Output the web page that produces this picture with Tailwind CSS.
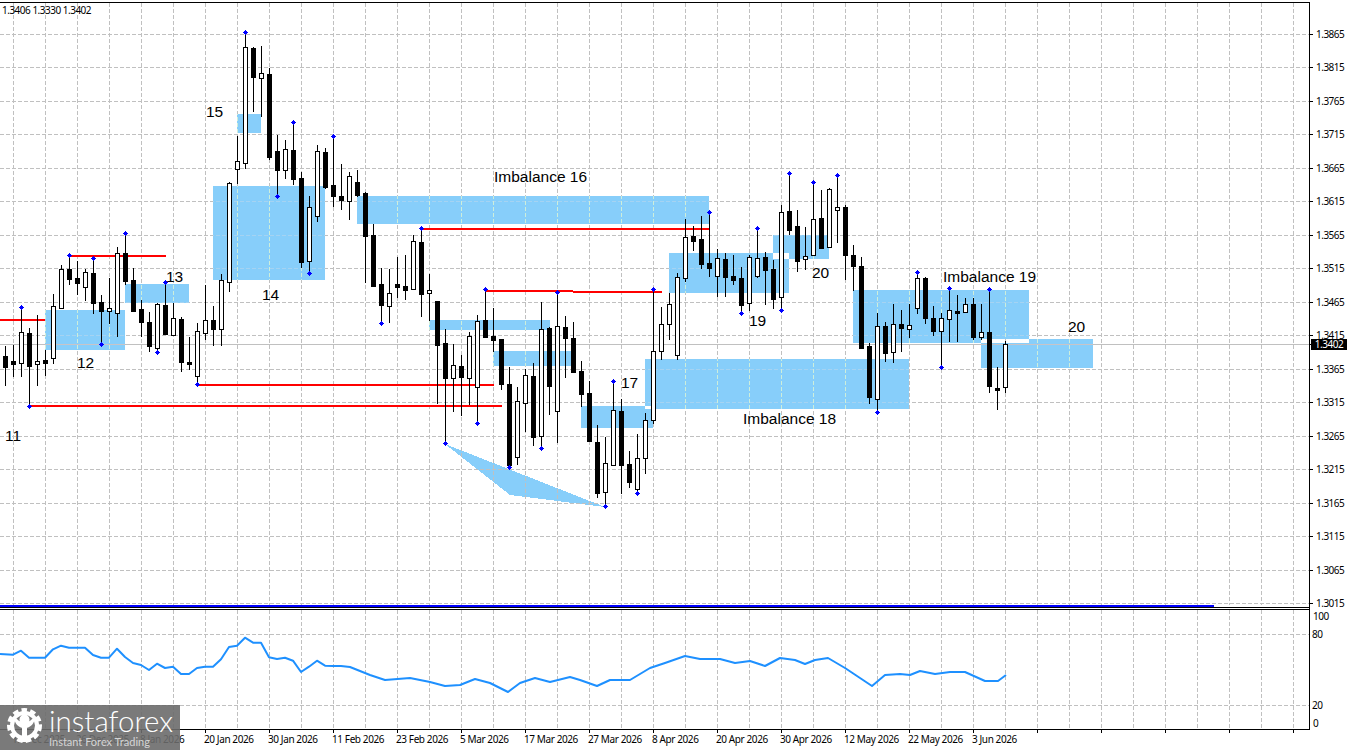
<!DOCTYPE html>
<html lang="en">
<head>
    <meta charset="UTF-8">
    <title>GBP/USD daily chart</title>
    <script src="https://cdn.jsdelivr.net/npm/@tailwindcss/browser@4"></script>
</head>
<body class="bg-white">
    <div class="relative w-[1350px] h-[750px] overflow-hidden bg-white text-black font-['Liberation_Sans',Arial,sans-serif]">
        <!-- Chart canvas, filled by the script below -->
        <svg id="chart" class="absolute inset-0" width="1350" height="750" viewBox="0 0 1350 750"></svg>

        <!-- OHLC line -->
        <span class="absolute left-[2px] top-[4px] font-['Noto_Sans',sans-serif] text-[10px] tracking-[-0.5px] leading-[12px]">1.3406 1.3330 1.3402</span>

        <!-- Chart annotations -->
        <div class="text-[15.5px] leading-[18px]">
            <span class="absolute left-[5px] top-[427px]">11</span>
            <span class="absolute left-[77px] top-[354px]">12</span>
            <span class="absolute left-[166px] top-[268px]">13</span>
            <span class="absolute left-[262px] top-[286px]">14</span>
            <span class="absolute left-[206px] top-[103px]">15</span>
            <span class="absolute left-[494px] top-[168px]">Imbalance 16</span>
            <span class="absolute left-[621px] top-[374px]">17</span>
            <span class="absolute left-[743px] top-[410px]">Imbalance 18</span>
            <span class="absolute left-[749px] top-[312px]">19</span>
            <span class="absolute left-[943px] top-[268px]">Imbalance 19</span>
            <span class="absolute left-[812px] top-[264px]">20</span>
            <span class="absolute left-[1068px] top-[318px]">20</span>
        </div>

        <!-- Price scale -->
        <div class="absolute left-[1316px] top-[27.5px] flex flex-col font-['Noto_Sans',sans-serif] text-[10px] tracking-[-0.5px] leading-[12px]">
            <span class="h-[33.5px]">1.3865</span>
            <span class="h-[33.5px]">1.3815</span>
            <span class="h-[33.5px]">1.3765</span>
            <span class="h-[33.5px]">1.3715</span>
            <span class="h-[33.5px]">1.3665</span>
            <span class="h-[33.5px]">1.3615</span>
            <span class="h-[33.5px]">1.3565</span>
            <span class="h-[33.5px]">1.3515</span>
            <span class="h-[33.5px]">1.3465</span>
            <span class="h-[33.5px]">1.3415</span>
            <span class="h-[33.5px]">1.3365</span>
            <span class="h-[33.5px]">1.3315</span>
            <span class="h-[33.5px]">1.3265</span>
            <span class="h-[33.5px]">1.3215</span>
            <span class="h-[33.5px]">1.3165</span>
            <span class="h-[33.5px]">1.3115</span>
            <span class="h-[33.5px]">1.3065</span>
            <span class="h-[33.5px]">1.3015</span>
        </div>
        <div class="absolute left-[1311px] top-[339px] w-[36px] h-[11px] bg-black text-white text-center font-['Noto_Sans',sans-serif] text-[10px] tracking-[-0.5px] leading-[11px]">1.3402</div>

        <!-- RSI scale -->
        <div class="font-['Noto_Sans',sans-serif] text-[10px] tracking-[-0.5px] leading-[12px]">
            <span class="absolute left-[1313px] top-[610px]">100</span>
            <span class="absolute left-[1312px] top-[628px]">80</span>
            <span class="absolute left-[1312px] top-[699px]">20</span>
            <span class="absolute left-[1313px] top-[717px]">0</span>
        </div>

        <!-- Time scale -->
        <div class="absolute left-[12px] top-[733px] flex font-['Noto_Sans',sans-serif] text-[10px] tracking-[-0.4px] leading-[12px] whitespace-nowrap">
            <span class="w-[64px]">15 Dec 2025</span>
            <span class="w-[64px]">26 Dec 2025</span>
            <span class="w-[64px]">8 Jan 2026</span>
            <span class="w-[64px]">20 Jan 2026</span>
            <span class="w-[64px]">30 Jan 2026</span>
            <span class="w-[64px]">11 Feb 2026</span>
            <span class="w-[64px]">23 Feb 2026</span>
            <span class="w-[64px]">5 Mar 2026</span>
            <span class="w-[64px]">17 Mar 2026</span>
            <span class="w-[64px]">27 Mar 2026</span>
            <span class="w-[64px]">8 Apr 2026</span>
            <span class="w-[64px]">20 Apr 2026</span>
            <span class="w-[64px]">30 Apr 2026</span>
            <span class="w-[64px]">12 May 2026</span>
            <span class="w-[64px]">22 May 2026</span>
            <span class="w-[64px]">3 Jun 2026</span>
        </div>

        <!-- Watermark -->
        <div class="absolute left-0 top-[705px] w-[180px] h-[45px] bg-[#6b6b6b]/90 flex text-white">
            <svg class="ml-[6px] mt-[2px] shrink-0" width="37" height="37" viewBox="0 0 37 37">
                <circle cx="18.5" cy="18.5" r="15.5" fill="none" stroke="#fff" stroke-width="4" stroke-dasharray="5.5 3.2"/>
                <circle cx="18.5" cy="18.5" r="12.5" fill="none" stroke="#fff" stroke-width="4"/>
                <circle cx="18.5" cy="12.5" r="5" fill="#fff"/>
                <path d="M8 12 C10 19 14 20 16 21 L16 35 L21 35 L21 21 C23 20 27 19 29 12 L26 12 C24 16 13 16 11 12 Z" fill="#fff"/>
            </svg>
            <div class="ml-[6px] flex flex-col">
                <span class="text-[29.5px] leading-[31px] font-light font-['Lato',sans-serif]">instaforex</span>
                <span class="text-[11px] leading-[12px] text-white/70 font-['Lato',sans-serif]">Instant Forex Trading</span>
            </div>
        </div>
    </div>

    <script>
        // [high, body top, body bottom, low, white?, dot]
        const candles = [
            [346,356,367,386,0],[345,361,364,377,0],[307,332,363,377,1,'t'],[328,333,366,406,0,'b'],
            [315,361,364,386,1],[350,360,363,376,0],[294,306,358,364,1],[265,269,308,309,1],
            [255,269,279,285,0,'t'],[261,278,283,295,0],[269,272,287,301,1],[258,273,303,314,0,'t'],
            [295,302,311,344,0,'b'],[278,308,311,324,1],[247,253,313,337,1],[233,253,281,285,0,'t'],
            [268,280,311,312,0],[300,309,322,337,0],[312,322,346,352,0],[303,304,348,352,1,'b'],
            [282,305,334,334,0,'t'],[303,318,335,335,1],[317,319,362,372,0],[337,362,364,370,0],
            [323,331,376,384,1,'b'],[285,320,333,340,1],[306,320,329,346,0],[274,280,329,346,1],
            [182,183,282,292,1],[136,161,169,184,1],[32,47,163,169,1,'t'],[47,48,77,112,0],
            [46,73,78,117,1],[68,74,157,160,0],[135,151,170,196,0,'b'],[140,149,170,179,1],
            [122,150,179,185,0,'t'],[172,178,262,268,0],[196,207,261,273,1,'b'],[145,151,216,222,1],
            [148,152,187,189,0],[136,185,196,207,0,'t'],[164,196,200,210,0],[172,176,201,220,1],
            [170,182,195,197,0],[192,193,236,283,0],[224,235,286,287,0],[268,284,305,323,0,'b'],
            [269,293,306,323,1],[257,284,287,298,0],[255,286,290,300,0],[235,241,289,289,1],
            [228,242,294,317,0,'t'],[274,290,293,321,1],[301,301,345,404,0],[329,343,378,443,0,'b'],
            [344,365,378,412,1],[355,366,377,416,0],[332,336,378,405,1],[315,321,387,423,1,'b'],
            [289,320,337,338,0,'t'],[308,336,340,352,0],[339,339,384,390,0],[367,384,465,467,0,'b'],
            [387,401,457,465,1],[369,375,403,432,1],[363,376,437,446,0],[302,329,436,448,1,'b'],
            [327,328,386,415,0],[292,326,411,443,1,'t'],[316,327,338,378,0],[322,338,372,373,0],
            [361,371,394,407,0],[381,393,441,441,0],[425,442,493,498,0],[437,463,492,506,1,'b'],
            [381,410,465,466,1,'t'],[399,411,465,494,0],[451,464,482,488,0],[434,458,489,493,1,'b'],
            [413,420,458,474,1],[289,351,420,424,1,'t'],[307,324,351,360,1],[293,304,324,340,1],
            [273,277,355,360,1],[219,237,278,282,1],[226,236,241,251,0],[216,239,264,269,0],
            [212,263,268,277,0,'t'],[249,258,276,297,1],[253,259,277,297,0],[255,276,280,285,0],
            [267,278,305,313,0,'b'],[255,257,303,311,1],[228,258,276,278,1,'t'],[252,257,270,305,0],
            [260,269,299,309,0],[205,212,297,310,1,'b'],[173,211,230,235,0,'t'],[210,226,261,272,0],
            [227,256,259,270,1],[182,219,255,256,1,'t'],[190,218,248,249,0],[188,189,247,247,1],
            [175,207,210,243,1,'t'],[205,207,255,280,0],[245,255,266,291,0],[257,266,348,349,0],
            [343,346,397,404,0],[313,326,399,412,1,'b'],[322,326,353,362,0],[304,324,352,363,1],
            [310,324,328,352,0],[304,325,329,338,1],[272,278,308,314,1,'t'],[277,278,318,324,0],
            [306,318,331,336,0],[313,318,331,367,1,'b'],[288,310,319,342,1,'t'],[295,311,313,342,0],
            [298,304,312,313,1],[298,304,337,340,0],[304,332,337,340,1],[289,332,386,393,0,'t'],
            [367,388,390,410,0],[341,344,387,393,1]
        ];
        // x1, y1, x2, y2 of the imbalance boxes
        const zones = [
            [45,310,125,350],[125,284,189,303],[213,186,325,280],[237,114,261,133],[357,196,709,224],
            [429,320,550,330],[493,351,573,366],[581,406,653,428],[645,359,909,409],[669,253,789,293],
            [773,235,829,259],[853,290,1029,343],[981,339,1093,368]
        ];
        // x1, x2, y of the red levels
        const levels = [
            [0,45,320],[69,166,256],[29,502,406],[197,494,385],[421,709,229],[485,573,291],[573,662,292]
        ];
        const rsi = [
            [0,654],[13,654.7],[21,650.7],[29,657.7],[45,657.7],[53,649.3],[61,645.7],[69,647.7],[85,647.7],
            [93,655],[101,657.7],[109,657.7],[117,648.7],[125,657],[133,663],[141,665],[149,670],[157,663.7],
            [165,668],[173,666.7],[181,674],[189,674],[197,668],[205,666.7],[213,666.7],[221,659.3],[229,647],
            [237,645.7],[245,637.7],[253,642.7],[261,642.7],[269,657.3],[277,659],[285,657.7],[293,660.7],
            [301,672],[309,666.7],[317,660.7],[325,665.7],[333,666],[341,666],[350,667],[370,675],[385,680],
            [410,678],[430,682],[445,686],[460,685],[475,679],[490,683],[508,692],[520,683],[535,678],[550,682],
            [570,677],[580,680],[597,686],[610,680],[630,680],[650,668],[665,663],[685,656],[700,659],[720,659],
            [735,663],[750,661],[765,666],[780,658],[795,660],[805,664],[815,660],[828,658],[845,668],[860,678],
            [872,686],[885,675],[900,674],[910,675],[920,671],[935,674],[950,672],[965,672],[985,681],[998,681],[1006,675]
        ];

        const gridColor = '#c0c0c0';
        let out = '';
        const rect = (x, y, w, h, fill) => `<rect x="${x}" y="${y}" width="${w}" height="${h}" fill="${fill}"/>`;
        const line = (x1, y1, x2, y2, color, extra = '') => `<line x1="${x1}" y1="${y1}" x2="${x2}" y2="${y2}" stroke="${color}" ${extra}/>`;

        // Overlapping boxes cancel out to white, so they share one evenodd path
        const zonePath = zones.map(z => `M${z[0]} ${z[1]}H${z[2]}V${z[3]}H${z[0]}Z`).join('');
        out += `<defs><clipPath id="inZone"><path clip-rule="evenodd" d="${zonePath}"/></clipPath></defs>`;
        out += '<g shape-rendering="crispEdges">';
        out += `<path d="${zonePath}" fill="#87cefa" fill-rule="evenodd"/>`;
        out += '<polygon points="445,444 605,507 510,495" fill="#87cefa"/>';

        // Grid
        const dash = 'stroke-dasharray="4 2"';
        const gridX = [];
        for (let x = 13.5; x < 1309; x += 32) gridX.push(x);
        const gridY = [];
        for (let i = 0; i < 18; i++) gridY.push(Math.floor(34 + i * 33.5) + 0.5);
        gridY.forEach(y => out += line(0, y, 1309, y, gridColor, dash));
        gridX.forEach(x => out += line(x, 3, x, 605, gridColor, dash));
        out += line(0, 634.5, 1309, 634.5, gridColor, dash) + line(0, 705.5, 1309, 705.5, gridColor, dash);
        gridX.forEach(x => out += line(x, 610, x, 729, gridColor, dash));
        out += line(0, 344.5, 1309, 344.5, gridColor);

        // Grid shows through the boxes in paler tints
        out += '<g clip-path="url(#inZone)">';
        gridY.forEach(y => out += line(0, y, 1309, y, '#a5d3f2', dash));
        gridX.forEach(x => out += line(x, 3, x, 605, '#cdeedb', dash));
        out += line(0, 344.5, 1309, 344.5, '#c8c4c8');
        out += '</g>';

        // Red levels
        levels.forEach(l => out += rect(l[0], l[2] - 1, l[1] - l[0], 2, '#ff0000'));

        // Candles
        candles.forEach((c, i) => {
            const x = 5 + 8 * i;
            out += rect(x, c[0], 1, c[3] - c[0], '#000');
            if (c[4]) out += `<rect x="${x - 1.5}" y="${c[1] + 0.5}" width="4" height="${c[2] - c[1]}" fill="#fff" stroke="#000"/>`;
            else out += rect(x - 2, c[1], 5, c[2] - c[1] + 1, '#000');
        });

        // Swing dots
        candles.forEach((c, i) => {
            if (!c[5]) return;
            const x = 5 + 8 * i, y = c[5] === 't' ? c[0] : c[3];
            out += rect(x - 1, y - 1, 3, 3, '#0000ff') + rect(x, y - 2, 1, 5, '#0000ff') + rect(x - 2, y, 5, 1, '#0000ff');
        });

        // Window frames
        out += rect(0, 605, 1214, 2, '#0000ff');
        out += rect(0, 2, 1310, 1, '#000') + rect(0, 607, 1310, 1, '#000') + rect(0, 609, 1310, 1, '#000') + rect(0, 729, 1310, 1, '#000');
        out += rect(1309, 2, 1, 728, '#000');
        gridY.forEach(y => out += rect(1310, y - 0.5, 3, 1, '#000'));
        out += rect(1310, 344, 3, 1, '#000');
        for (let x = 13; x < 1309; x += 64) out += rect(x, 730, 1, 3, '#000');
        out += '</g>';

        // RSI line
        out += `<polyline points="${rsi.map(p => p.join(',')).join(' ')}" fill="none" stroke="#1e90ff" stroke-width="2" stroke-linejoin="round"/>`;

        document.getElementById('chart').innerHTML = out;
    </script>
</body>
</html>
